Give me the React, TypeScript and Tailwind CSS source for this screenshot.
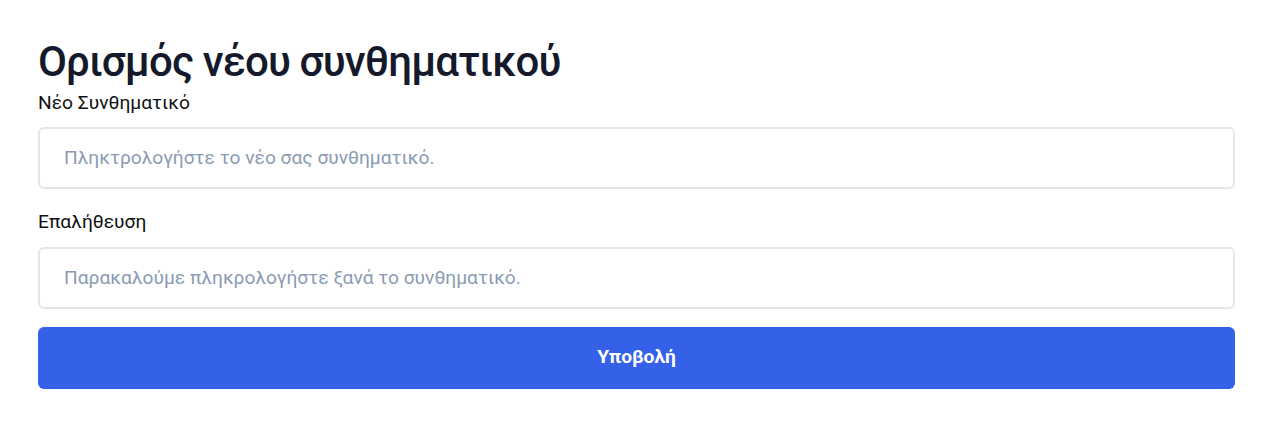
export default function App() {
  return (
    <div
      className="min-h-[430px] bg-white pl-[38px] pr-[26px] pt-[37px]"
      style={{ fontFamily: "Roboto, 'Noto Sans', sans-serif" }}
    >
      <h1 className="text-[42px] leading-[50px] font-medium tracking-[-0.02em] text-[#141a2b]">Ορισμός νέου συνθηματικού</h1>
      <label className="mt-[2px] block text-[19.2px] leading-[28.8px] text-[#111111]">Νέο Συνθηματικό</label>
      <input
        type="password"
        placeholder="Πληκτρολογήστε το νέο σας συνθηματικό."
        className="mt-[9px] block h-[62px] w-full rounded-md border-2 border-[#e3e6ec] bg-white px-6 text-[19.2px] text-gray-900 outline-none placeholder:text-[#8b9bb4]"
      />
      <label className="mt-[19px] block text-[19.2px] leading-[28.8px] text-[#111111]">Επαλήθευση</label>
      <input
        type="password"
        placeholder="Παρακαλούμε πληκρολογήστε ξανά το συνθηματικό."
        className="mt-[10px] block h-[62px] w-full rounded-md border-2 border-[#e3e6ec] bg-white px-6 text-[19.2px] text-gray-900 outline-none placeholder:text-[#8b9bb4]"
      />
      <button className="mt-[18px] block h-[62px] w-full rounded-md bg-[#3461e8] text-[19.2px] font-bold text-white">
        Υποβολή
      </button>
    </div>
  );
}
